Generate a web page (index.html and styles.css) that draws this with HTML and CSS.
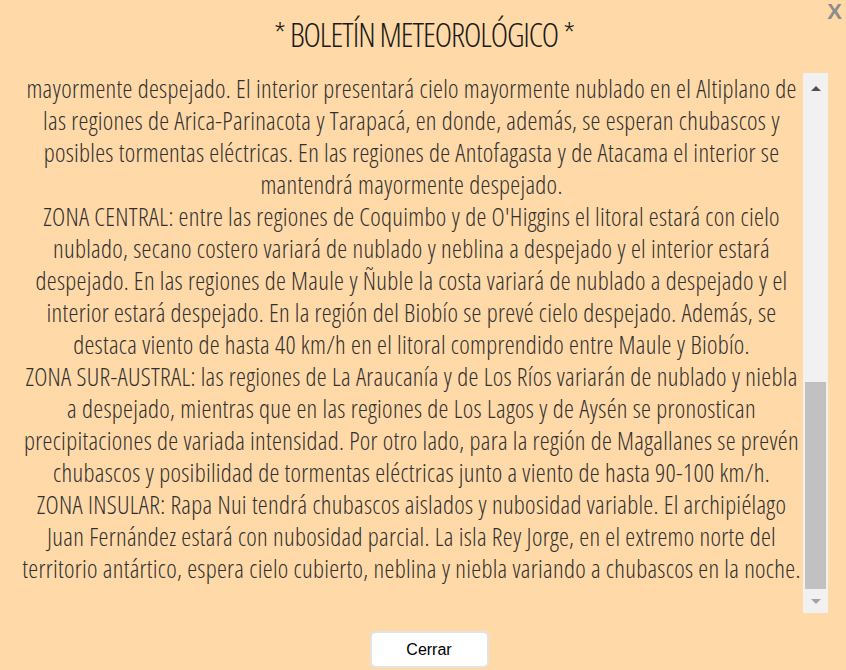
FILE: index.html
```html
<!DOCTYPE html>
<html lang="es">
<head>
<meta charset="utf-8">
<title>Boletín meteorológico</title>
<link rel="stylesheet" href="styles.css">
</head>
<body>
<div class="dialog">
  <button class="close" type="button">X</button>
  <h1 class="title">* BOLETÍN METEOROLÓGICO *</h1>
  <div class="scroll-row">
    <div class="text">
      <p>mayormente despejado. El interior presentará cielo mayormente nublado en el Altiplano de<br>las regiones de Arica-Parinacota y Tarapacá, en donde, además, se esperan chubascos y<br>posibles tormentas eléctricas. En las regiones de Antofagasta y de Atacama el interior se<br>mantendrá mayormente despejado.</p>
      <p>ZONA CENTRAL: entre las regiones de Coquimbo y de O'Higgins el litoral estará con cielo<br>nublado, secano costero variará de nublado y neblina a despejado y el interior estará<br>despejado. En las regiones de Maule y Ñuble la costa variará de nublado a despejado y el<br>interior estará despejado. En la región del Biobío se prevé cielo despejado. Además, se<br>destaca viento de hasta 40 km/h en el litoral comprendido entre Maule y Biobío.</p>
      <p>ZONA SUR-AUSTRAL: las regiones de La Araucanía y de Los Ríos variarán de nublado y niebla<br>a despejado, mientras que en las regiones de Los Lagos y de Aysén se pronostican<br>precipitaciones de variada intensidad. Por otro lado, para la región de Magallanes se prevén<br>chubascos y posibilidad de tormentas eléctricas junto a viento de hasta 90-100 km/h.</p>
      <p>ZONA INSULAR: Rapa Nui tendrá chubascos aislados y nubosidad variable. El archipiélago<br>Juan Fernández estará con nubosidad parcial. La isla Rey Jorge, en el extremo norte del<br>territorio antártico, espera cielo cubierto, neblina y niebla variando a chubascos en la noche.</p>
    </div>
    <div class="scrollbar">
      <div class="arrow up"></div>
      <div class="track"><div class="thumb"></div></div>
      <div class="arrow down"></div>
    </div>
  </div>
  <div class="actions">
    <button class="btn" type="button">Cerrar</button>
  </div>
</div>
</body>
</html>
```

FILE: styles.css
```css
html, body {
  margin: 0;
  padding: 0;
  background: #ffdaa8;
}
.dialog {
  position: relative;
  width: 846px;
  height: 670px;
  display: flex;
  flex-direction: column;
  box-sizing: border-box;
}
.close {
  position: absolute;
  right: 4px;
  top: 0;
  border: 0;
  background: none;
  padding: 0;
  font: bold 22px/24px "Liberation Sans", Arial, sans-serif;
  color: #8c8c8c;
}
.title {
  margin: 0;
  height: 72px;
  box-sizing: border-box;
  padding-top: 15px;
  padding-left: 2px;
  text-align: center;
  font-family: "Open Sans", sans-serif;
  font-weight: 300;
  font-size: 33px;
  line-height: 40px;
  font-stretch: 75%;
  letter-spacing: -1.1px;
  color: #1a1a1a;
}
.scroll-row {
  display: flex;
  height: 541px;
  padding-left: 20px;
}
.text {
  flex: 1;
  overflow: hidden;
  text-align: center;
  color: #303030;
  font-family: "Open Sans", sans-serif;
  font-weight: 300;
  font-size: 25px;
  line-height: 32px;
  font-stretch: 75%;
  letter-spacing: 0.3px;
  white-space: nowrap;
}
.text p {
  margin: 0;
}
.scrollbar {
  width: 25px;
  margin-right: 18px;
  margin-top: 1px;
  background: #f1f1f1;
  display: flex;
  flex-direction: column;
}
.arrow {
  display: flex;
  align-items: center;
  justify-content: center;
}
.arrow.up {
  height: 30px;
}
.arrow.down {
  height: 24px;
}
.arrow.up::before {
  content: "";
  border-left: 5px solid transparent;
  border-right: 5px solid transparent;
  border-bottom: 5px solid #505050;
}
.arrow.down::before {
  content: "";
  border-left: 5px solid transparent;
  border-right: 5px solid transparent;
  border-top: 5px solid #a3a3a3;
}
.track {
  flex: 1;
  display: flex;
  flex-direction: column;
  justify-content: flex-end;
  padding: 0 2px;
}
.thumb {
  height: 207px;
  background: #c1c1c1;
}
.actions {
  flex: 1;
  display: flex;
  justify-content: center;
  padding-top: 18px;
  margin-left: 12px;
}
.btn {
  width: 119px;
  height: 37px;
  background: #fff;
  border: 2px solid #e3e3e3;
  border-radius: 6px;
  font: 400 16px "Liberation Sans", Arial, sans-serif;
  color: #000;
}
```
